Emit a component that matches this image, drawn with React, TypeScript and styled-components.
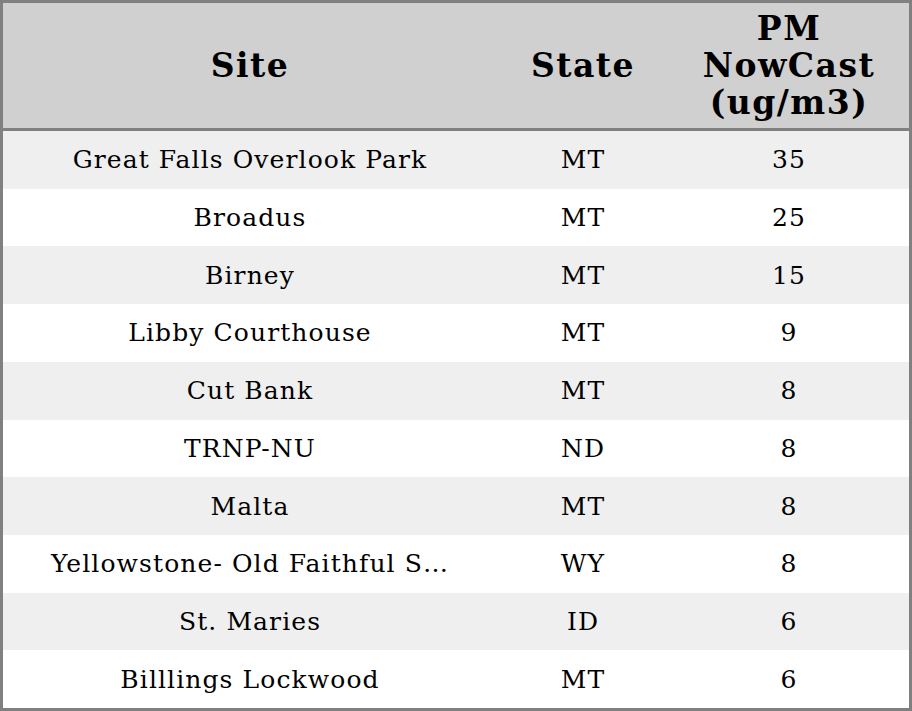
import { ReactElement } from "react";
import styled, { createGlobalStyle } from "styled-components";

interface SiteRow {
  site: string;
  state: string;
  pm: number;
}

const ROWS: SiteRow[] = [
  { site: "Great Falls Overlook Park", state: "MT", pm: 35 },
  { site: "Broadus", state: "MT", pm: 25 },
  { site: "Birney", state: "MT", pm: 15 },
  { site: "Libby Courthouse", state: "MT", pm: 9 },
  { site: "Cut Bank", state: "MT", pm: 8 },
  { site: "TRNP-NU", state: "ND", pm: 8 },
  { site: "Malta", state: "MT", pm: 8 },
  { site: "Yellowstone- Old Faithful S…", state: "WY", pm: 8 },
  { site: "St. Maries", state: "ID", pm: 6 },
  { site: "Billlings Lockwood", state: "MT", pm: 6 },
];

export default function App(): ReactElement {
  return (
    <>
      <GlobalStyle />
      <TableFrame>
        <HeaderRow>
          <HeaderCell>Site</HeaderCell>
          <HeaderCell>State</HeaderCell>
          <HeaderCell>
            PM
            <br />
            NowCast
            <br />
            (ug/m3)
          </HeaderCell>
        </HeaderRow>
        {ROWS.map((row, i) => (
          <BodyRow key={`site_row_${i}`} $striped={i % 2 === 0}>
            <BodyCell>{row.site}</BodyCell>
            <BodyCell>{row.state}</BodyCell>
            <BodyCell>{row.pm}</BodyCell>
          </BodyRow>
        ))}
      </TableFrame>
    </>
  );
}

const GlobalStyle = createGlobalStyle`
  html, body {
    margin: 0;
    padding: 0;
    background: #ffffff;
  }

  body {
    font-family: "DejaVu Serif", "Liberation Serif", serif;
    color: #000000;
  }
`;

const TableFrame = styled.div`
  width: 912px;
  height: 711px;
  box-sizing: border-box;
  border: 3px solid #808080;
  display: grid;
  grid-template-rows: 128px repeat(10, 1fr);
  overflow: hidden;
`;

const HeaderRow = styled.div`
  display: grid;
  grid-template-columns: 494px 172px 1fr;
  background: #d0d0d0;
  border-bottom: 3px solid #808080;
`;

const HeaderCell = styled.div`
  display: flex;
  align-items: center;
  justify-content: center;
  text-align: center;
  font-size: 33px;
  font-weight: bold;
  letter-spacing: 1.5px;
  line-height: 37px;
`;

const BodyRow = styled.div<{ $striped: boolean }>`
  display: grid;
  grid-template-columns: 494px 172px 1fr;
  background: ${({ $striped }) => ($striped ? "#efefef" : "#ffffff")};
`;

const BodyCell = styled.div`
  display: flex;
  align-items: center;
  justify-content: center;
  font-size: 25px;
  letter-spacing: 1.1px;
  white-space: nowrap;
`;
